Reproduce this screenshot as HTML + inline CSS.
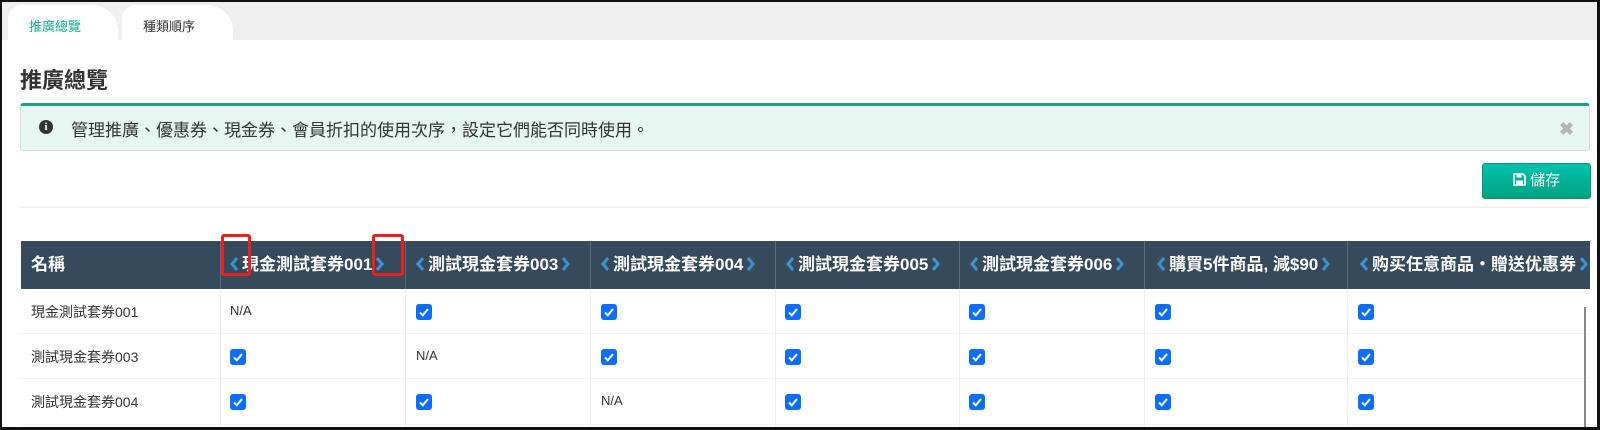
<!DOCTYPE html>
<html><head><meta charset="utf-8"><style>
*{margin:0;padding:0;box-sizing:border-box}
body{width:1600px;height:430px;overflow:hidden;background:#fff;font-family:"Liberation Sans","Noto Sans CJK TC",sans-serif;position:relative}
.frame{position:absolute;left:0;top:0;width:1600px;height:430px;border:2px solid #111;border-right-width:3px;border-bottom-width:3px;z-index:10;pointer-events:none}
.bar{position:absolute;left:2px;top:2px;right:2px;height:38px;background:#efefef}
.tab{position:absolute;top:5px;height:35px;background:#fff;border-radius:14px 26px 0 0;font-size:13px;color:#333;padding:11px 0 0 0}
.abs{position:absolute}
.hdr{position:absolute;top:241px;height:48px;left:21px;width:1569px;background:#364a5c;overflow:hidden}
.hc{position:absolute;top:0;height:48px;color:#fff;font-weight:bold;font-size:17px;line-height:48px;white-space:nowrap;overflow:hidden;border-left:1px solid #5b6b7a}
.hc svg{vertical-align:-2px;margin:0 3px}
.cb{position:absolute;width:16px;height:16px;background:#0d6efd;border-radius:3px}
.cb svg{position:absolute;left:2px;top:2px}
.na{position:absolute;font-size:13px;color:#333}
.rt{position:absolute;left:31px;font-size:14px;color:#333}
.hl{position:absolute;left:21px;width:1569px;height:1px;background:#eef0f2}
.vl{position:absolute;top:289px;height:141px;width:1px;background:#eef0f2}
</style></head><body>
<div class="bar"></div>
<div class="tab" style="left:8px;width:110px"><span style="color:#1aaa8f;padding-left:21px">推廣總覽</span></div>
<div class="tab" style="left:122px;width:111px"><span style="padding-left:21px">種類順序</span></div>
<div class="abs" style="left:20px;top:63px;font-size:22px;font-weight:bold;color:#333">推廣總覽</div>
<div class="abs" style="left:20px;top:103px;width:1570px;height:48px;background:#e6f6f0;border:1px solid #d3e4de;border-top:3px solid #17a08a;border-radius:3px"></div>
<div class="abs" style="left:39px;top:120px;width:14px;height:14px;border-radius:50%;background:#333;color:#fff;font-size:11px;font-weight:bold;text-align:center;line-height:14px;font-family:'Liberation Serif',serif">i</div>
<div class="abs" style="left:71px;top:116px;font-size:17px;color:#333">管理推廣、優惠券、現金券、會員折扣的使用次序，設定它們能否同時使用。</div>
<div class="abs" style="left:1559px;top:120px;font-size:18px;color:#b5b5b5;font-weight:bold;line-height:18px">✖</div>
<div class="abs" style="left:1482px;top:163px;width:109px;height:36px;border-radius:3px;border:1px solid #009876;background:linear-gradient(#00c2ad,#00a282);color:#fff;font-size:15px;text-align:center;line-height:34px">
<svg width="13" height="13" viewBox="0 0 13 13" style="vertical-align:-1px"><path d="M1 1h9l2 2v9H1z" fill="none" stroke="#fff" stroke-width="1.6"/><rect x="3.5" y="1" width="5" height="3.5" fill="#fff"/><rect x="3" y="7.5" width="7" height="4" fill="#fff"/></svg> 儲存</div>
<div class="abs" style="left:20px;top:206px;width:1570px;height:2px;background:#f2f2f2"></div>

<svg width="0" height="0" style="position:absolute"><defs>
<symbol id="l" viewBox="0 0 10 16"><path d="M8 2L3 8l5 6" fill="none" stroke="#3d93d1" stroke-width="3"/></symbol>
<symbol id="r" viewBox="0 0 10 16"><path d="M2 2l5 6-5 6" fill="none" stroke="#3d93d1" stroke-width="3"/></symbol>
</defs></svg>

<div class="hdr">
<div class="hc" style="left:0;width:199px;border:none;padding-left:10px">名稱</div>
<div class="hc" style="left:199px;width:185px;padding-left:5px"><svg width="10" height="16"><use href="#l"/></svg><span style="display:inline-block;width:130px;overflow:hidden;vertical-align:top">現金測試套券001</span><svg width="10" height="16"><use href="#r"/></svg></div>
<div class="hc" style="left:384px;width:185px;padding-left:6px"><svg width="10" height="16"><use href="#l"/></svg>測試現金套券003<svg width="10" height="16"><use href="#r"/></svg></div>
<div class="hc" style="left:569px;width:185px;padding-left:6px"><svg width="10" height="16"><use href="#l"/></svg>測試現金套券004<svg width="10" height="16"><use href="#r"/></svg></div>
<div class="hc" style="left:754px;width:184px;padding-left:6px"><svg width="10" height="16"><use href="#l"/></svg>測試現金套券005<svg width="10" height="16"><use href="#r"/></svg></div>
<div class="hc" style="left:938px;width:185px;padding-left:6px"><svg width="10" height="16"><use href="#l"/></svg>測試現金套券006<svg width="10" height="16"><use href="#r"/></svg></div>
<div class="hc" style="left:1123px;width:203px;padding-left:8px"><svg width="10" height="16"><use href="#l"/></svg>購買5件商品, 減$90<svg width="10" height="16"><use href="#r"/></svg></div>
<div class="hc" style="left:1326px;width:250px;padding-left:8px"><svg width="10" height="16"><use href="#l"/></svg>购买任意商品・贈送优惠券<svg width="10" height="16"><use href="#r"/></svg></div>
</div>
<div class="abs" style="left:221px;top:234px;width:30px;height:42px;border:3px solid #e8211f;border-radius:3px"></div>
<div class="abs" style="left:372px;top:234px;width:32px;height:42px;border:3px solid #e8211f;border-radius:3px"></div>

<div class="hl" style="top:333px"></div><div class="hl" style="top:378px"></div><div class="hl" style="top:424px"></div>
<div class="vl" style="left:220px"></div><div class="vl" style="left:405px"></div><div class="vl" style="left:590px"></div><div class="vl" style="left:775px"></div><div class="vl" style="left:959px"></div><div class="vl" style="left:1144px"></div><div class="vl" style="left:1347px"></div>
<div class="abs" style="left:1584px;top:307px;width:2px;height:123px;background:#888"></div>

<div class="rt" style="top:302px">現金測試套券001</div>
<div class="rt" style="top:347px">測試現金套券003</div>
<div class="rt" style="top:392px">測試現金套券004</div>
<div class="na" style="left:230px;top:303px">N/A</div>
<div class="na" style="left:416px;top:348px">N/A</div>
<div class="na" style="left:601px;top:393px">N/A</div>

<div id="cbs"></div>
<script>
var xs=[230,416,601,785,969,1155,1358],ys=[304,349,394],h='';
var na={ '0,0':1,'1,1':1,'2,2':1};
for(var r=0;r<3;r++)for(var c=0;c<7;c++){if(na[r+','+c])continue;
h+='<div class="cb" style="left:'+xs[c]+'px;top:'+ys[r]+'px"><svg width="12" height="12" viewBox="0 0 12 12"><path d="M2 6.5l2.8 2.8L10 3" fill="none" stroke="#fff" stroke-width="2"/></svg></div>';}
document.getElementById('cbs').innerHTML=h;
</script>
<div class="frame"></div>
</body></html>
